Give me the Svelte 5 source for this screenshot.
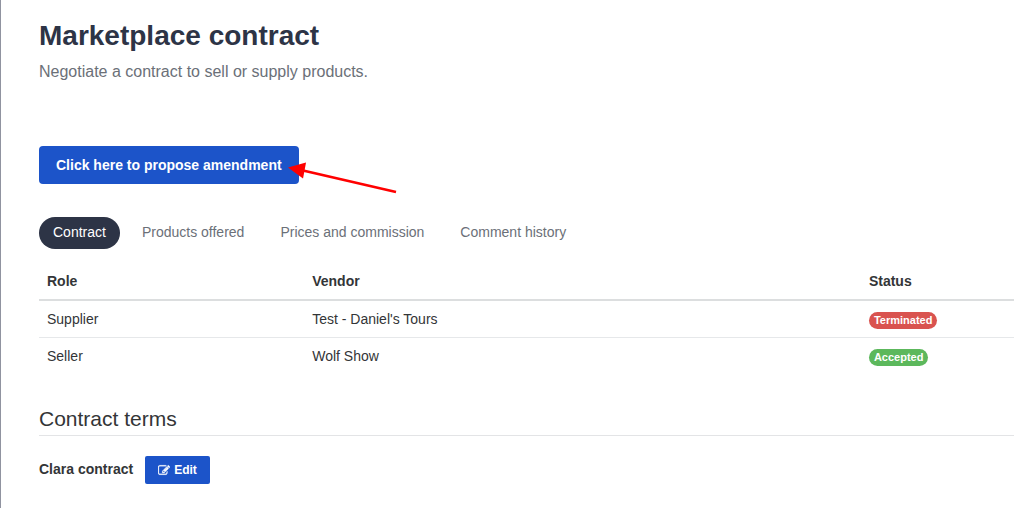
<script>
  const tabs = ['Contract', 'Products offered', 'Prices and commission', 'Comment history'];
  const rows = [
    { role: 'Supplier', vendor: "Test - Daniel's Tours", status: 'Terminated', kind: 'danger' },
    { role: 'Seller', vendor: 'Wolf Show', status: 'Accepted', kind: 'success' }
  ];
  let active = $state('Contract');
</script>

<main>
  <h1>Marketplace contract</h1>
  <p class="lead">Negotiate a contract to sell or supply products.</p>

  <div class="action">
    <button class="primary">Click here to propose amendment</button>
    <svg class="arrow" width="110" height="32" viewBox="0 0 110 32" aria-hidden="true">
      <path d="M107 30 14 8.500" stroke="#ff0000" stroke-width="2.800" fill="none" />
      <path d="M-1 5.500 17 .5 14 16.500z" fill="#ff0000" />
    </svg>
  </div>

  <nav>
    {#each tabs as tab}
      <button class="tab" class:active={active === tab} onclick={() => (active = tab)}>{tab}</button>
    {/each}
  </nav>

  <table>
    <thead>
      <tr><th class="role">Role</th><th class="vendor">Vendor</th><th>Status</th></tr>
    </thead>
    <tbody>
      {#each rows as row}
        <tr>
          <td>{row.role}</td>
          <td>{row.vendor}</td>
          <td><span class="badge {row.kind}">{row.status}</span></td>
        </tr>
      {/each}
    </tbody>
  </table>

  <h2>Contract terms</h2>
  <div class="term">
    <strong>Clara contract</strong>
    <button class="primary small">
      <svg width="12" height="12" viewBox="0 0 1792 1664" aria-hidden="true">
        <path fill="currentColor" stroke="currentColor" stroke-width="40" d="M888 1184l116-116-152-152-116 116v56h96v96h56zM1328 464q-16-16-33 1L945 815q-17 17-1 33t33-1l350-350q17-17 1-33zM1408 1058v190q0 119-84.500 203.500T1120 1536H288q-119 0-203.500-84.500T0 1248V416q0-119 84.500-203.500T288 128h832q63 0 117 25 15 7 18 23 3 17-9 29l-49 49q-14 14-32 8-23-6-45-6H288q-66 0-113 47t-47 113v832q0 66 47 113t113 47h832q66 0 113-47t47-113v-126q0-13 9-22l64-64q15-15 35-7t20 29zM1312 320l288 288-672 672H640V992zM1756 452l-92 92-288-288 92-92q28-28 68-28t68 28l152 152q28 28 28 68t-28 68z" />
      </svg>
      Edit
    </button>
  </div>
</main>

<style>
  :global(body) {
    margin: 0;
    background: #fff;
  }
  main {
    box-sizing: border-box;
    min-height: 100vh;
    border-left: 1px solid #9093a0;
    padding: 18px 0 24px 38px;
    font: 14px/20px "Liberation Sans", Arial, sans-serif;
    color: #333537;
  }
  h1 {
    margin: 0;
    font-size: 28px;
    line-height: 36px;
    color: #2d3446;
  }
  .lead {
    margin: 6px 0 0;
    font-size: 16px;
    line-height: 24px;
    color: #6b7078;
  }
  button {
    border: 0;
    font: inherit;
    cursor: pointer;
  }
  .action {
    display: flex;
    position: relative;
    margin-top: 62px;
  }
  .primary {
    padding: 9px 17px;
    border-radius: 4px;
    background: #1c54c9;
    color: #fff;
    font-weight: bold;
  }
  .arrow {
    position: absolute;
    left: 250px;
    top: 16px;
    overflow: visible;
  }
  nav {
    display: flex;
    flex-wrap: wrap;
    gap: 8px;
    margin-top: 33px;
  }
  .tab {
    padding: 5px 14px 7px;
    border-radius: 16px;
    background: none;
    color: #6b7078;
  }
  .tab.active {
    background: #2d3446;
    color: #fff;
  }
  table {
    width: 100%;
    margin-top: 14px;
    border-collapse: collapse;
    text-align: left;
  }
  th,
  td {
    padding: 8px;
    font-size: 14px;
    line-height: 20px;
  }
  th {
    border-bottom: 2px solid #dcdedf;
  }
  tbody tr + tr td {
    border-top: 1px solid #e6e8ea;
  }
  .role {
    width: 27.2%;
  }
  .vendor {
    width: 57.1%;
  }
  .badge {
    display: inline-block;
    padding: 3px 5px;
    border-radius: 10px;
    font-size: 11px;
    line-height: 11px;
    font-weight: bold;
    color: #fff;
  }
  .danger {
    background: #d9534f;
  }
  .success {
    background: #5cb85c;
  }
  h2 {
    margin: 32px 0 0;
    padding-bottom: 3px;
    border-bottom: 1px solid #e3e4e6;
    font-size: 21px;
    line-height: 26px;
    font-weight: normal;
  }
  .term {
    display: flex;
    align-items: flex-start;
    gap: 12px;
    margin-top: 20px;
  }
  .term strong {
    line-height: 26px;
  }
  .small {
    display: flex;
    align-items: center;
    gap: 4px;
    padding: 4px 13px;
    border-radius: 2px;
    font-size: 12px;
  }
</style>
